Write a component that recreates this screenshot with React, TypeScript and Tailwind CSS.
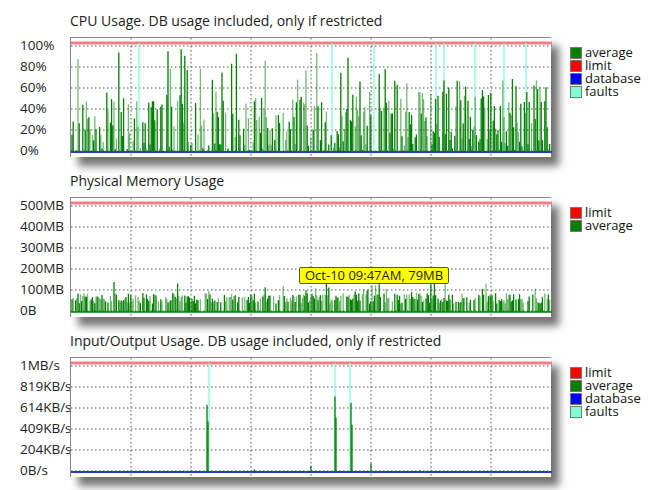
import React from "react";

function rng(seed: number) {
  let s = seed;
  return () => {
    s = (s * 1103515245 + 12345) % 2147483648;
    return s / 2147483648;
  };
}

const W = 481;
const H = 120;

function Grid({ rows }: { rows: number[] }) {
  const xs = [60, 120, 180, 240, 300, 360, 420];
  return (
    <g>
      {rows.map((y) => (
        <line key={"h" + y} x1={0} x2={W} y1={y} y2={y} stroke="#555" strokeWidth={1} strokeDasharray="1.5 2.5" />
      ))}
      {xs.map((x) => (
        <line key={"v" + x} x1={x} x2={x} y1={0} y2={H} stroke="#555" strokeWidth={1} strokeDasharray="1.5 2.5" />
      ))}
    </g>
  );
}

type Kind = "cpu" | "mem" | "io";

function Plot({ kind }: { kind: Kind }) {
  const rows = [8, 29, 50, 71, 92, 113];
  const base = 114;
  const r = rng(kind === "cpu" ? 7 : kind === "mem" ? 13 : 29);
  const bars: { x: number; y: number; o: number }[] = [];
  const faults: number[] = [];
  for (let x = 1; x < W - 1; x += 1.2) {
    let v = 0;
    if (kind === "cpu") {
      const a = r();
      if (a < 0.25) v = 0;
      else if (a < 0.9) v = r() * 55;
      else v = 40 + r() * 60;
      if (x > 330) v = a < 0.15 ? 0 : r() * 70;
      if (r() < 0.02) faults.push(Math.round(x));
    } else if (kind === "mem") {
      const a = r();
      if (a < 0.2) v = 0;
      else v = 8 + r() * 10 + (r() < 0.06 ? r() * 20 : 0);
      if (x > 180 && x < 360 && r() < 0.1) v = 15 + r() * 15;
    } else {
      v = r() < 0.02 ? 1 + r() * 2 : 0;
    }
    bars.push({ x, y: base - (v / 100) * 105, o: r() < 0.4 ? 0.55 : 1 });
  }
  if (kind === "io") {
    const spikes: [number, number][] = [[136, 64], [137, 48], [264, 72], [265, 52], [280, 66], [281, 45], [300, 8], [240, 6]];
    spikes.forEach(([x, v]) => bars.push({ x, y: base - (v / 100) * 105, o: 1 }));
    faults.push(138, 264, 279);
  }
  return (
    <svg width={W} height={H} className="block">
      <Grid rows={rows} />
      <line x1={0} x2={W} y1={5} y2={5} stroke="#f08080" strokeWidth={3} />
      {faults.map((x, i) => (
        <line key={"f" + i} x1={x} x2={x} y1={5} y2={base} stroke="#7fffd4" strokeWidth={1.2} />
      ))}
      {bars.map((b, i) => (
        <line key={i} x1={b.x} x2={b.x} y1={base} y2={b.y} stroke="#008000" strokeOpacity={b.o} strokeWidth={1.3} />
      ))}
      {kind !== "mem" && <line x1={0} x2={W} y1={base} y2={base} stroke="#2040c0" strokeWidth={2} />}
      {kind === "mem" && <line x1={0} x2={W} y1={base} y2={base} stroke="#008000" strokeWidth={1.5} />}
    </svg>
  );
}

const legendColors: Record<string, string> = {
  average: "#008000",
  limit: "#ff0000",
  database: "#0000ff",
  faults: "#7fffd4",
};

function Legend({ items }: { items: string[] }) {
  return (
    <div className="flex flex-col mt-[9px] ml-[19px]">
      {items.map((it) => (
        <div key={it} className="flex items-center h-[13px] gap-[3px]">
          <div className="w-[12px] h-[12px] border border-[#777]" style={{ background: legendColors[it] }} />
          <span className="text-[13px] leading-[13px] text-[#111]">{it}</span>
        </div>
      ))}
    </div>
  );
}

function Chart({ title, labels, kind, legend, tooltip }: { title: string; labels: string[]; kind: Kind; legend: string[]; tooltip?: boolean }) {
  return (
    <div className="flex flex-col">
      <div className="h-[20px] mb-[7px] pl-[70px] text-[14px] leading-[22px] text-[#222]">{title}</div>
      <div className="flex">
        <div className="w-[50px] ml-[20px] relative">
          {labels.map((l, i) => (
            <div key={l} className="absolute left-0 text-[13.5px] leading-[16px] text-[#222] whitespace-nowrap" style={{ top: 0 + i * 21 }}>
              {l}
            </div>
          ))}
        </div>
        <div className="relative z-10 bg-white border-t border-l border-[#888] shadow-[8px_9px_8px_rgba(0,0,0,0.55)] w-[481px] h-[120px]">
          <Plot kind={kind} />
          {tooltip && (
            <div className="absolute left-[228px] top-[69px] bg-[#ffff00] border border-[#555] rounded-[2px] px-[5px] text-[13px] leading-[15px] text-[#222] whitespace-nowrap">
              Oct-10 09:47AM, 79MB
            </div>
          )}
        </div>
        <Legend items={legend} />
      </div>
    </div>
  );
}

export default function App() {
  return (
    <div className="w-[666px] h-[490px] bg-white pt-[10px] flex flex-col gap-[13px] overflow-hidden" style={{ fontFamily: '"Open Sans", "Noto Sans", sans-serif' }}>
      <Chart title="CPU Usage. DB usage included, only if restricted" labels={["100%", "80%", "60%", "40%", "20%", "0%"]} kind="cpu" legend={["average", "limit", "database", "faults"]} />
      <Chart title="Physical Memory Usage" labels={["500MB", "400MB", "300MB", "200MB", "100MB", "0B"]} kind="mem" legend={["limit", "average"]} tooltip />
      <Chart title="Input/Output Usage. DB usage included, only if restricted" labels={["1MB/s", "819KB/s", "614KB/s", "409KB/s", "204KB/s", "0B/s"]} kind="io" legend={["limit", "average", "database", "faults"]} />
    </div>
  );
}
